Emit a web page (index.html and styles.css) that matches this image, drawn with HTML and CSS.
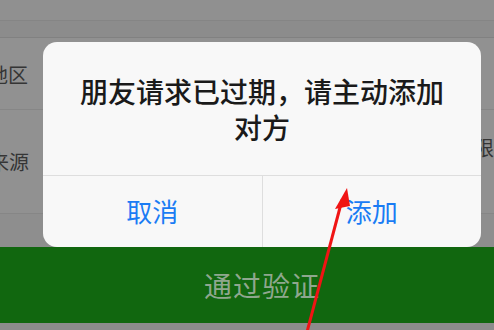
FILE: index.html
```html
<!DOCTYPE html>
<html lang="zh-CN">
<head>
    <meta charset="UTF-8">
    <meta name="viewport" content="width=device-width, initial-scale=1.0">
    <title>朋友验证</title>
    <link rel="stylesheet" href="styles.css">
</head>
<body>
    <div class="page">
        <div class="nav"></div>
        <div class="band"></div>
        <div class="row row-region">
            <span class="label">地区</span>
        </div>
        <div class="row row-source">
            <span class="label">来源</span>
            <span class="value">限</span>
        </div>
        <div class="spacer"></div>
        <div class="verify-btn">通过验证</div>
        <div class="footer"></div>
    </div>

    <div class="dialog">
        <div class="dialog-body">
            <p class="dialog-title">朋友请求已过期，请主动添加<br>对方</p>
        </div>
        <div class="dialog-actions">
            <button class="dialog-btn">取消</button>
            <button class="dialog-btn">添加</button>
        </div>
    </div>

    <!-- red annotation arrow -->
    <svg class="arrow" width="494" height="330" viewBox="0 0 494 330">
        <line x1="307" y1="332" x2="342" y2="200" stroke="#f01414" stroke-width="3"/>
        <polygon points="347,188 335,209 350,206" fill="#f01414"/>
    </svg>
</body>
</html>
```

FILE: styles.css
```css
body {
    margin: 0;
    padding: 0;
    width: 494px;
    height: 330px;
    overflow: hidden;
    position: relative;
    font-family: "Noto Sans CJK SC", "Noto Sans", sans-serif;
    background-color: #8f8f8f;
}
.page {
    display: flex;
    flex-direction: column;
    height: 330px;
}
.nav {
    height: 20px;
    background-color: #909090;
    border-bottom: 1px solid #858585;
}
.band {
    height: 16px;
    background-color: #8c8c8c;
    border-bottom: 1px solid #818181;
}
.row {
    display: flex;
    align-items: center;
    justify-content: space-between;
    background-color: #919191;
    border-bottom: 1px solid #868686;
    box-sizing: border-box;
}
.row-region {
    height: 72px;
    padding-top: 2px;
}
.row-source {
    height: 104px;
}
.label {
    font-size: 20px;
    color: #353535;
    margin-left: -12px;
}
.row-source .label {
    margin-left: -11px;
}
.value {
    font-size: 20px;
    color: #353535;
    margin-right: 0;
    margin-bottom: 28px;
}
.spacer {
    height: 33px;
    background-color: #8e8e8e;
}
.verify-btn {
    height: 76px;
    background-color: #11670f;
    color: #8fa78e;
    font-size: 28px;
    letter-spacing: 1px;
    display: flex;
    align-items: center;
    justify-content: center;
    padding-left: 30px;
}
.footer {
    flex: 1;
    background-color: #8c8c8c;
}
.dialog {
    position: absolute;
    left: 43px;
    top: 42px;
    width: 438px;
    height: 205px;
    background-color: #f8f8f8;
    border-radius: 14px;
    display: flex;
    flex-direction: column;
    overflow: hidden;
}
.dialog-body {
    height: 133px;
    border-bottom: 1px solid #dedede;
    display: flex;
    align-items: center;
    justify-content: center;
}
.dialog-title {
    margin: 0;
    font-size: 28px;
    line-height: 36px;
    color: #1a1a1a;
    text-align: center;
    font-weight: 500;
}
.dialog-actions {
    flex: 1;
    display: flex;
}
.dialog-btn {
    flex: 1;
    border: none;
    background: none;
    font-family: inherit;
    font-size: 26px;
    color: #1a7cf4;
    padding: 0;
    padding-bottom: 2px;
}
.dialog-btn + .dialog-btn {
    border-left: 1px solid #dedede;
}
.arrow {
    position: absolute;
    left: 0;
    top: 0;
}
```
